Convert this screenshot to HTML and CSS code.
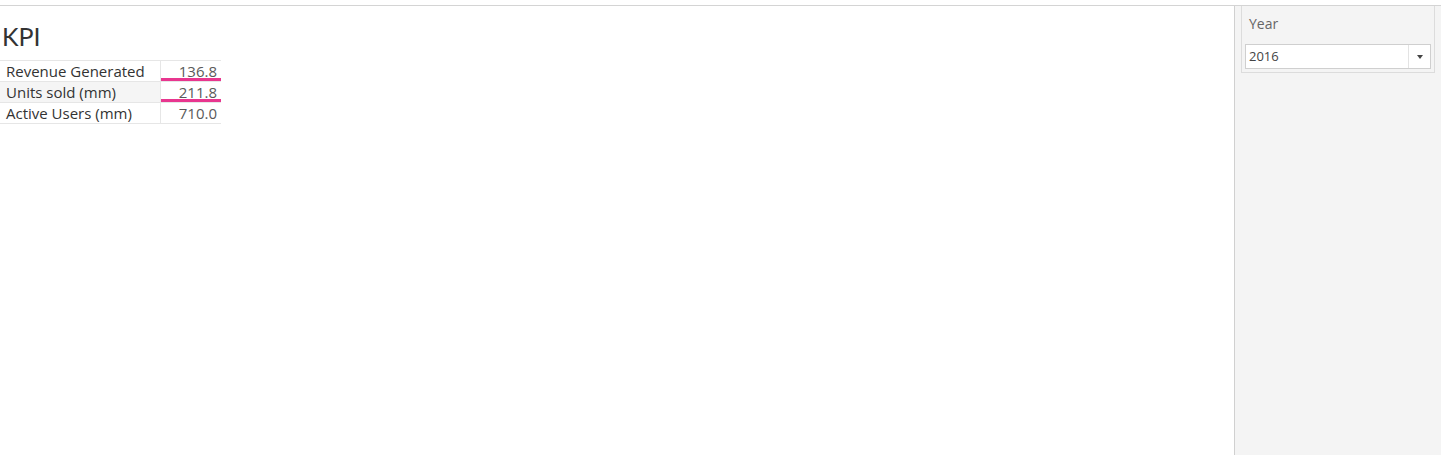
FILE: index.html
```html
<!DOCTYPE html>
<html>
<head>
<meta charset="utf-8">
<link rel="stylesheet" href="styles.css">
</head>
<body>
<div class="page">
  <main class="main">
    <h1 class="title">KPI</h1>
    <table class="kpi">
      <tr><td class="label">Revenue Generated</td><td class="val hl">136.8</td></tr>
      <tr class="alt"><td class="label">Units sold (mm)</td><td class="val hl">211.8</td></tr>
      <tr><td class="label">Active Users (mm)</td><td class="val">710.0</td></tr>
    </table>
  </main>
  <aside class="side">
    <div class="card">
      <div class="card-title">Year</div>
      <div class="select">
        <span class="select-text">2016</span>
        <span class="select-btn"><span class="tri"></span></span>
      </div>
    </div>
  </aside>
</div>
</body>
</html>
```
FILE: styles.css
```css
html, body { margin: 0; padding: 0; }
body {
  width: 1441px; height: 455px; overflow: hidden;
  font-family: "Open Sans", sans-serif;
  color: #333;
  background: #fff;
}
.page {
  display: flex;
  height: 449px;
  margin-top: 5px;
  border-top: 1px solid #d4d4d4;
}
.main {
  width: 1234px;
  background: #fff;
}
.title {
  margin: 16px 0 0 2px;
  font-family: "Lato", sans-serif;
  font-weight: normal;
  font-size: 25px;
  line-height: 28px;
  color: #333;
}
.kpi {
  margin-top: 10px;
  border-collapse: collapse;
}
.kpi tr { height: 21px; }
.kpi td { padding: 0; border-top: 1px solid #e6e6e6; line-height: 20px; }
.kpi tr:last-child td { border-bottom: 1px solid #e6e6e6; }
.label {
  width: 154px;
  padding-left: 6px !important;
  border-right: 1px solid #e6e6e6;
  color: #333;
  font-size: 15px;
}
.alt .label { background: #f5f5f5; }
.val {
  width: 56px;
  padding-right: 4px !important;
  text-align: right;
  color: #5a5a5a;
  font-size: 15px;
  font-weight: 400;
}
.val.hl { box-shadow: inset 0 -3px 0 #e8368f; }
.side {
  flex: 1;
  background: #f4f4f4;
  border-left: 1px solid #d0d0d0;
  padding: 0 6px 0 6px;
}
.card {
  border: 1px solid #dcdcdc;
  border-top: none;
  height: 66px;
  padding: 0 3px;
}
.card-title {
  font-family: "Open Sans", sans-serif;
  font-size: 14px;
  color: #666;
  padding: 8px 0 0 4px;
  height: 30px;
}
.select {
  display: flex;
  height: 23px;
  border: 1px solid #cfcfcf;
  background: #fff;
}
.select-text {
  flex: 1;
  font-family: "Open Sans", sans-serif;
  font-size: 13px;
  color: #444;
  line-height: 23px;
  padding-left: 3px;
}
.select-btn {
  width: 21px;
  border-left: 1px solid #e3e3e3;
  display: flex;
  align-items: center;
  justify-content: center;
}
.tri {
  width: 0; height: 0;
  border-left: 3px solid transparent;
  border-right: 3px solid transparent;
  border-top: 4px solid #444;
}
```
